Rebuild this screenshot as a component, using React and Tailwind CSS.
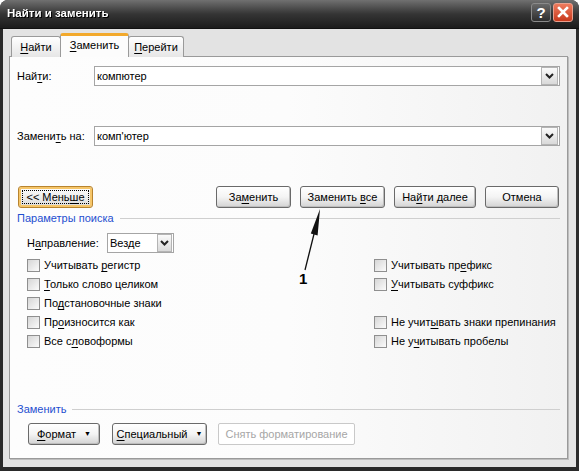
import React from 'react';

const Chevron = () => (
  <svg width="9" height="6" viewBox="0 0 9 6">
    <polyline points="1,1 4.5,4.5 8,1" fill="none" stroke="#222" strokeWidth="2" />
  </svg>
);

const DropBtn = ({ className = '' }) => (
  <div className={`flex items-center justify-center border border-[#b4b4b4] bg-gradient-to-b from-[#fafafa] to-[#d9d9d9] ${className}`}>
    <Chevron />
  </div>
);

const Btn = ({ children, className = '', disabled = false }) => (
  <button
    className={
      disabled
        ? `h-[22px] flex items-center justify-center border border-[#c9c9c9] bg-white text-[#a6a6a6] rounded-[2px] ${className}`
        : `h-[22px] flex items-center justify-center border border-[#6a6a6a] rounded-[3px] bg-gradient-to-b from-white via-[#f4f4f4] to-[#d3d3d3] shadow-[inset_-1px_-1px_0_#bdbdbd] ${className}`
    }
  >
    {children}
  </button>
);

const Check = ({ children }) => (
  <div className="h-[19px] flex items-center gap-[4px]">
    <div className="w-[13px] h-[13px] border border-[#8f8f8f] bg-gradient-to-br from-[#d6d6d6] to-[#fbfbfb]" />
    <span>{children}</span>
  </div>
);

const U = ({ children }) => <span className="underline underline-offset-2">{children}</span>;

const Section = ({ title }) => (
  <div className="h-[14px] flex items-center gap-[6px]">
    <span className="text-[#1f4fd0]">{title}</span>
    <div className="flex-1 h-px bg-[#cfcfcf]" />
  </div>
);

export default function App() {
  return (
    <div className="relative w-[579px] h-[471px] bg-[#2a2a2a] rounded-t-[8px] overflow-hidden flex flex-col font-['Liberation_Sans',Arial,sans-serif] text-[11px] text-black">
      {/* title bar */}
      <div className="h-[29px] shrink-0 flex items-center pl-[7px] pr-[6px] bg-gradient-to-b from-[#717171] via-[#353535] to-[#1c1c1c] border-b border-[#111]">
        <span className="text-white font-bold text-[11.5px] drop-shadow-[1px_1px_0_#000]">Найти и заменить</span>
        <div className="ml-auto flex gap-[2px] -mt-[4px]">
          <div className="w-[20px] h-[19px] rounded-[3px] border border-[#8a8a8a] bg-gradient-to-b from-[#6a6a6a] to-[#2e2e2e] flex items-center justify-center text-white font-bold text-[15px] leading-none">?</div>
          <div className="w-[20px] h-[19px] rounded-[3px] border border-[#e9a08e] bg-gradient-to-b from-[#ee7a5c] to-[#c8391c] flex items-center justify-center">
            <svg width="12" height="12" viewBox="0 0 12 12">
              <path d="M2 2 L10 10 M10 2 L2 10" stroke="white" strokeWidth="2.6" strokeLinecap="square" />
            </svg>
          </div>
        </div>
      </div>

      {/* body */}
      <div className="flex-1 mx-[3px] mb-[4px] bg-[#e3e3e3] flex flex-col pt-[5px]">
        {/* tabs */}
        <div className="flex items-end pl-[8px] h-[23px] relative z-10 -mb-px">
          <div className="w-[50px] h-[21px] flex items-center justify-center border border-b-0 border-[#9a9a9a] rounded-t-[3px] bg-gradient-to-b from-white to-[#e6e6e6]">
            <span><U>Н</U>айти</span>
          </div>
          <div className="w-[69px] h-[24px] flex items-center justify-center border-x border-[#9a9a9a] border-t-[3px] border-t-[#f2a92c] rounded-t-[3px] bg-[#fcfcfc] pb-[2px] -mx-px">
            <span><U>З</U>аменить</span>
          </div>
          <div className="w-[56px] h-[21px] flex items-center justify-center border border-b-0 border-[#9a9a9a] rounded-t-[3px] bg-gradient-to-b from-white to-[#e6e6e6]">
            <span><U>П</U>ерейти</span>
          </div>
        </div>

        {/* panel */}
        <div className="flex-1 ml-[6px] mr-[8px] mb-[8px] border border-[#9a9a9a] bg-gradient-to-r from-[#fdfdfd] via-[#fcfcfc] to-[#f1f1f1] shadow-[1px_1px_0_#bdbdbd] flex flex-col px-[7px] pt-[9px] pb-[13px]">
          <div className="h-[20px] flex items-center">
            <span className="w-[77px]">Най<U>т</U>и:</span>
            <div className="flex-1 h-[20px] border border-[#a5a5a5] bg-white flex items-center pl-[2px] pr-px">
              <span>компютер</span>
              <DropBtn className="ml-auto w-[17px] h-[18px]" />
            </div>
          </div>
          <div className="h-[20px] mt-[40px] flex items-center">
            <span className="w-[77px]">Замени<U>т</U>ь на:</span>
            <div className="flex-1 h-[20px] border border-[#a5a5a5] bg-white flex items-center pl-[2px] pr-px">
              <span>комп'ютер</span>
              <DropBtn className="ml-auto w-[17px] h-[18px]" />
            </div>
          </div>

          <div className="mt-[40px] flex items-center pl-px">
            <button className="w-[75px] h-[22px] rounded-[3px] border border-[#b8842f] bg-gradient-to-b from-white to-[#dadada] shadow-[inset_0_0_0_2px_#f6c66a] flex items-center justify-center p-[3px]">
              <span className="w-full h-full border border-dotted border-black flex items-center justify-center">
                <span>&lt;&lt; Мень<U>ш</U>е</span>
              </span>
            </button>
            <div className="ml-auto flex gap-[9px] mr-[1px]">
              <Btn className="w-[75px]"><span>За<U>м</U>енить</span></Btn>
              <Btn className="w-[85px]"><span>Заменить <U>в</U>се</span></Btn>
              <Btn className="w-[82px]"><span>На<U>й</U>ти далее</span></Btn>
              <Btn className="w-[74px]"><span>Отмена</span></Btn>
            </div>
          </div>

          <div className="mt-[3px]">
            <Section title="Параметры поиска" />
          </div>

          <div className="mt-[8px] pl-[10px] h-[20px] flex items-center">
            <span className="w-[80px]">Н<U>а</U>правление:</span>
            <div className="w-[67px] h-[20px] border border-[#a5a5a5] bg-white flex items-center pl-[2px] pr-px">
              <span>Везде</span>
              <DropBtn className="ml-auto w-[15px] h-[18px]" />
            </div>
          </div>

          <div className="mt-[3px] pl-[10px] flex">
            <div className="w-[347px] flex flex-col">
              <Check>Учитывать <U>р</U>егистр</Check>
              <Check><U>Т</U>олько слово целиком</Check>
              <Check>По<U>д</U>становочные знаки</Check>
              <Check>Пр<U>о</U>износится как</Check>
              <Check>Все с<U>л</U>овоформы</Check>
            </div>
            <div className="flex flex-col">
              <Check>Учитывать пр<U>е</U>фикс</Check>
              <Check><U>У</U>читывать суффикс</Check>
              <div className="h-[19px]" />
              <Check>Не учит<U>ы</U>вать знаки препинания</Check>
              <Check>Не у<U>ч</U>итывать пробелы</Check>
            </div>
          </div>

          <div className="mt-auto">
            <Section title="Заменить" />
            <div className="mt-[7px] pl-[11px] flex items-center gap-[12px]">
              <Btn className="w-[72px] gap-[8px]"><span><U>Ф</U>ормат</span><span className="text-[7px]">▼</span></Btn>
              <Btn className="w-[95px] gap-[8px]"><span><U>С</U>пециальный</span><span className="text-[7px]">▼</span></Btn>
              <Btn disabled className="w-[137px] -ml-px"><span>Снять форматирование</span></Btn>
            </div>
          </div>
        </div>
      </div>

      {/* annotation */}
      <svg className="absolute left-0 top-0 pointer-events-none" width="579" height="471" viewBox="0 0 579 471">
        <line x1="305" y1="270" x2="314.5" y2="232" stroke="#111" strokeWidth="1.3" />
        <polygon points="320,209 317.6,235.5 310.8,233.6" fill="#111" />
      </svg>
      <div className="absolute left-[299px] top-[271px] text-[15px] font-bold leading-none">1</div>
    </div>
  );
}
